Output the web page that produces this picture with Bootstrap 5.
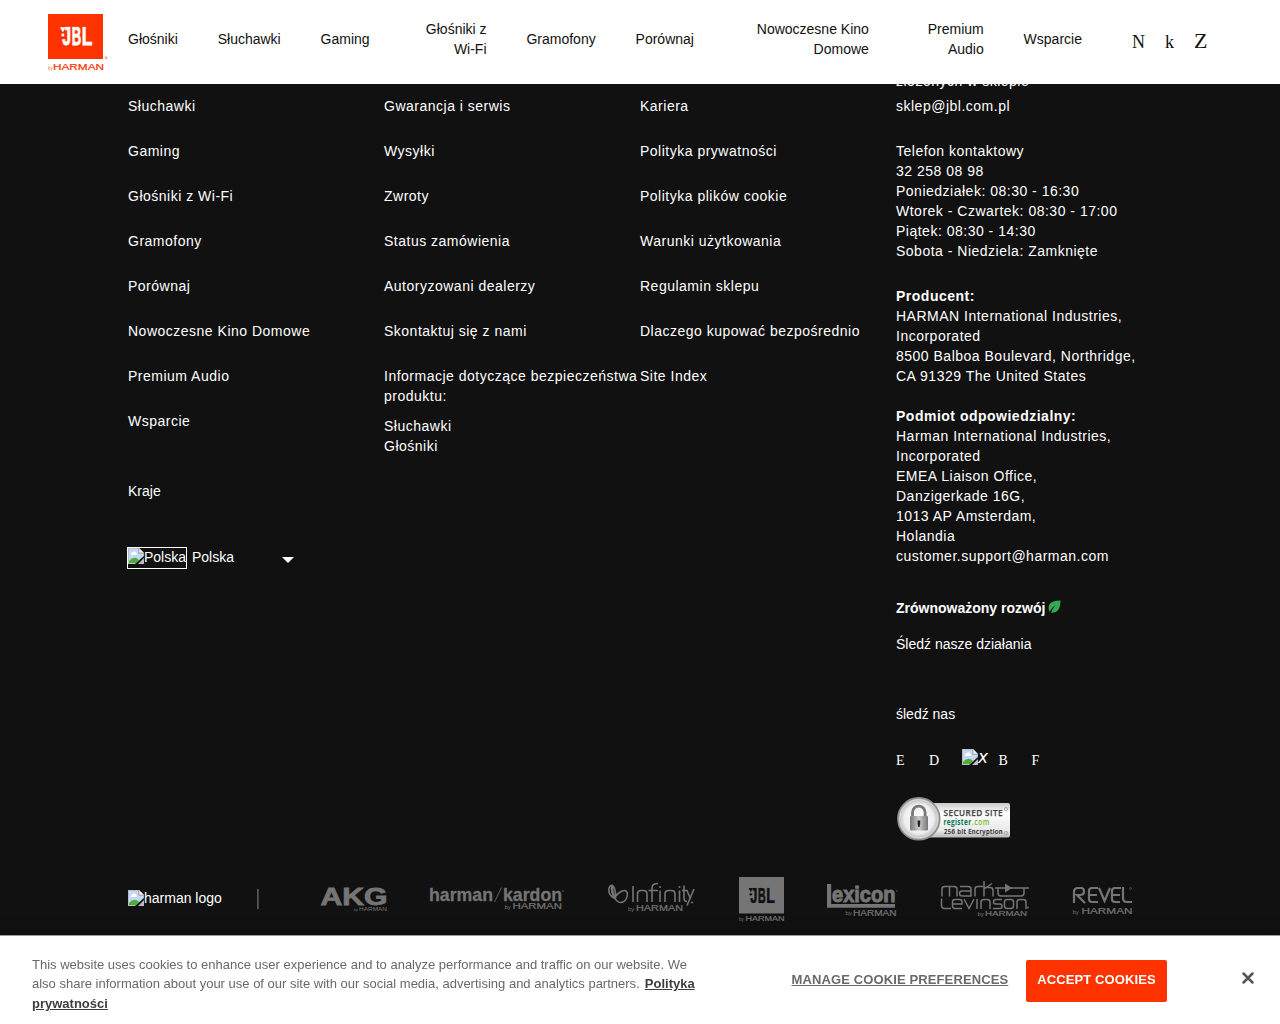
<!DOCTYPE html>
<html lang="pl">
<head>
<meta charset="utf-8">
<meta name="viewport" content="width=device-width, initial-scale=1">
<title>JBL Polska</title>
<link href="https://cdn.jsdelivr.net/npm/bootstrap@5.3.0/dist/css/bootstrap.min.css" rel="stylesheet">
<style>
body{font-family:Helvetica,"Liberation Sans",Arial,sans-serif;font-size:14px;line-height:20px;background:#111;color:#fff;overflow:hidden;height:1024px}
a{color:inherit;text-decoration:none}
svg{overflow:visible}
.site-head{height:84px;background:#fff;color:#111;padding-left:48px}
.site-logo{width:60px;height:58px;margin-top:-1px}
.main-menu{margin-left:20px;gap:39.9px;margin-top:-6px}
.main-menu a{text-align:right}
.w-wifi{width:77px}.w-kino{width:135px}.w-prem{width:75px}
.glyph-icons{font-family:"Liberation Serif",serif;font-size:18px;margin-left:50px;gap:20px;margin-top:-1px}
.glyph-icons .big{font-size:22px}
.foot{width:1024px;margin-left:128px;padding-top:71px}
.foot-cols{height:806px}
.foot-col{width:256px;letter-spacing:.5px;padding-top:25px}
.foot-col.contact{padding-top:0}
.foot-col li{margin-bottom:25px}
.tight{letter-spacing:0}
.lands{padding-top:25px;margin-bottom:46px}
.flag-frame{border:1px solid #fff;height:22px;margin-left:-1px;width:60px;line-height:18px}
.flag-name{margin:-2px 0 0 5px}
.caret{width:0;height:0;border:6px solid transparent;border-top-color:#fff;border-bottom:0;margin:4px 0 0 47.500px}
.social{font-family:"Liberation Serif",serif;height:20px;margin-top:27px;margin-bottom:25px;letter-spacing:0}
.social span{width:33px}
.social i{width:36.500px;height:20px;margin-top:-4px;font-family:"DejaVu Sans",sans-serif;font-size:17px}
.brands{height:45px}
.brands svg{flex:none;height:45px;fill:#757575}
.brands svg.jbl-dark{height:16px;fill:#111}
.cookie{height:89px;background:#fff;color:#696969;box-shadow:0 0 18px rgba(0,0,0,.2);border-top:1px solid #999;font-size:13px;line-height:19.4px}
.cookie-copy{width:680px;margin:19px 0 0 32px}
.cookie-copy a{color:#3d3d3d;font-weight:700;text-decoration:underline;margin-left:1.500px}
.manage{font-weight:700;text-decoration:underline;letter-spacing:.12px;margin:34px 0 0 79.500px;width:217.500px;white-space:nowrap}
.accept{background:#ff3300;color:#fff;font-weight:700;font-size:13px;width:141px;height:42px;margin:24px 0 0 17px;border-radius:2px;padding:0 0 3px;border:0;line-height:36px;letter-spacing:.12px}
.close-x{margin:35.500px 0 0 75px}
</style>
</head>
<body>
<svg width="0" height="0" class="position-absolute"><defs>
<symbol id="broken" viewBox="0 0 16 16"><path d="M0 0H11L16 5V16H0Z" fill="#b9bcc0"/><path d="M1 1H10V6H15V8L8 15H1Z" fill="#c3d8f7"/><path d="M3 6q0-2 2-2q2-2 3 1q2 0 1 2H3Z" fill="#fff"/><path d="M1 15V13Q6 7 11 12L8 15Z" fill="#4fae35"/><path d="M11 0V5H16Z" fill="#f6f6f6" stroke="#999" stroke-width=".7"/><path d="M16 8V10L10 16H7Z" fill="#111"/><path d="M16 11V16H11Z" fill="#b9bcc0"/></symbol>
<symbol id="jbl" viewBox="0 0 35 20"><g font-family="Liberation Sans" font-weight="700" font-size="27" stroke-width=".9"><text transform="translate(2.300 19) scale(.6 1)">J</text><text transform="translate(12 19) scale(.5 1)">B</text><text transform="translate(22.500 19) scale(.66 1)">L</text></g><path d="M0 .5H5.600L2.900 5.500Z"/><circle cx="2.900" cy="8.500" r="1.500"/></symbol>
</defs></svg>

<header class="site-head fixed-top d-flex align-items-center">
  <svg class="site-logo" viewBox="48 13 60 58"><path fill="#f30" d="M48 14h55v45H48z"/><svg x="60" y="26.500" width="34" height="20" fill="#fff" stroke="#fff" stroke-width=".2" viewBox="0 0 35 20"><use href="#jbl" width="35" height="20"/></svg><g fill="#f30" font-family="Liberation Sans"><text x="53" y="69.500" font-size="9" textLength="51" lengthAdjust="spacingAndGlyphs" stroke="#f30" stroke-width=".2">HARMAN</text><text x="48" y="69.500" font-size="4.500" opacity=".7">by</text></g><circle cx="106.200" cy="57.800" r="1" fill="none" stroke="#f30" stroke-width=".5"/></svg>
  <nav class="main-menu d-flex align-items-center">
    <a href="#">Głośniki</a><a href="#">Słuchawki</a><a href="#">Gaming</a><a href="#" class="w-wifi">Głośniki z<br>Wi-Fi</a><a href="#">Gramofony</a><a href="#">Porównaj</a><a href="#" class="w-kino">Nowoczesne Kino<br>Domowe</a><a href="#" class="w-prem">Premium<br>Audio</a><a href="#">Wsparcie</a>
  </nav>
  <div class="glyph-icons d-flex align-items-baseline"><span>N</span><span>k</span><span class="big">Z</span></div>
</header>

<footer class="foot">
  <div class="foot-cols d-flex">
    <div class="foot-col">
      <ul class="list-unstyled mb-0"><li>Słuchawki</li><li>Gaming</li><li>Głośniki z Wi-Fi</li><li>Gramofony</li><li>Porównaj</li><li>Nowoczesne Kino Domowe</li><li>Premium Audio</li><li>Wsparcie</li></ul>
      <div class="tight lands">Kraje</div>
      <div class="tight d-flex align-items-center"><span class="flag-frame d-flex"><svg width="16" height="16" class="flex-shrink-0"><use href="#broken"/></svg>Polska</span><span class="flag-name">Polska</span><span class="caret"></span></div>
    </div>
    <div class="foot-col">
      <ul class="list-unstyled mb-0"><li>Gwarancja i serwis</li><li>Wysyłki</li><li>Zwroty</li><li>Status zamówienia</li><li>Autoryzowani dealerzy</li><li>Skontaktuj się z nami</li><li class="text-nowrap">Informacje dotyczące bezpieczeństwa<br>produktu:<div style="margin-top:10px">Słuchawki<br>Głośniki</div></li></ul>
    </div>
    <div class="foot-col">
      <ul class="list-unstyled mb-0"><li>Kariera</li><li>Polityka prywatności</li><li>Polityka plików cookie</li><li>Warunki użytkowania</li><li>Regulamin sklepu</li><li>Dlaczego kupować bezpośrednio</li><li>Site Index</li></ul>
    </div>
    <div class="foot-col contact text-nowrap">
      <div style="margin-bottom:5px">złożonych w sklepie</div>
      <div style="margin-bottom:25px">sklep@jbl.com.pl</div>
      <div style="margin-bottom:25px">Telefon kontaktowy<br>32 258 08 98<br>Poniedziałek: 08:30 - 16:30<br>Wtorek - Czwartek: 08:30 - 17:00<br>Piątek: 08:30 - 14:30<br>Sobota - Niedziela: Zamknięte</div>
      <div style="margin-bottom:20px"><b>Producent:</b><br>HARMAN International Industries,<br>Incorporated<br>8500 Balboa Boulevard, Northridge,<br>CA 91329 The United States</div>
      <div style="margin-bottom:32px"><b>Podmiot odpowiedzialny:</b><br>Harman International Industries,<br>Incorporated<br>EMEA Liaison Office,<br>Danzigerkade 16G,<br>1013 AP Amsterdam,<br>Holandia<br>customer.support@harman.com</div>
      <div class="tight d-flex mb-3"><b>Zrównoważony rozwój</b><svg width="14" height="14" viewBox="0 0 14 14" style="margin:2px 0 0 3px"><path d="M12.500 .5Q4 .8 1.800 4Q-.5 7.500 1.600 11.800Q3 8 7.500 5.200Q4 9 3 12.700Q8 13 10.500 9.500Q12.300 7 12.500 .5Z" fill="#34a853"/></svg></div>
      <div class="tight" style="margin-bottom:50px">Śledź nasze działania</div>
      <div class="tight">śledź nas</div>
      <div class="social d-flex align-items-start"><span>E</span><span>D</span><i class="d-flex"><svg width="16" height="16" style="margin-top:2px" class="flex-shrink-0"><use href="#broken"/></svg>x</i><span>B</span><span>F</span></div>
      <svg class="d-block" width="115" height="45" viewBox="896 796 115 45">
        <defs><linearGradient id="sg" x2="0" y2="1"><stop stop-color="#c9c9c9"/><stop offset=".3" stop-color="#fff"/><stop offset=".8" stop-color="#e8e8e8"/><stop offset="1" stop-color="#b8b8b8"/></linearGradient><linearGradient id="lk" x2="1"><stop stop-color="#777"/><stop offset=".5" stop-color="#ccc"/><stop offset="1" stop-color="#777"/></linearGradient><radialGradient id="rg"><stop stop-color="#fff"/><stop offset=".7" stop-color="#eee"/><stop offset="1" stop-color="#aaa"/></radialGradient></defs>
        <rect x="918" y="803" width="92" height="34.500" rx="2" fill="url(#sg)"/><circle cx="918.800" cy="818.800" r="21" fill="url(#rg)" stroke="#8b8b8b" stroke-width="1.400"/><circle cx="918.800" cy="818.800" r="19" fill="none" stroke="#ddd"/>
        <path d="M912.500 817V812.500a6.300 6.300 0 0 1 12.600 0V817" fill="none" stroke="#777" stroke-width="2.800"/><rect x="910" y="816" width="18" height="14.500" rx="1" fill="url(#lk)"/><path d="M917.600 820.500h2.600v3l-.6 3.500h-1.400l-.6-3.500z" fill="#222"/>
        <g font-family="Open Sans" font-weight="600"><text x="943.500" y="816" font-size="9.500" fill="#444" stroke="#444" stroke-width=".25" textLength="59.500" lengthAdjust="spacingAndGlyphs">SECURED SITE</text><text x="943.500" y="825.400" font-weight="700" fill="#00764b" font-size="8.300" textLength="28" lengthAdjust="spacingAndGlyphs">register</text><text x="971.800" y="825.400" fill="#74b82a" font-size="8.300" textLength="18" lengthAdjust="spacingAndGlyphs">.com</text><text x="944" y="833.600" fill="#333" stroke="#333" stroke-width=".2" font-size="7.500" textLength="59" lengthAdjust="spacingAndGlyphs">256 bit Encryption</text></g><g fill="none" stroke="#888" stroke-width=".6"><circle cx="1006" cy="809" r="1.600"/><circle cx="1006" cy="833" r="1.600"/></g>
      </svg>
    </div>
  </div>
  <div class="brands d-flex">
    <div class="d-flex" style="width:129px;padding-top:11px"><svg width="16" height="16" style="height:16px;margin-top:2px"><use href="#broken"/></svg><span>harman logo</span></div>
    <svg width="2" viewBox="257 877 2 45"><path d="M257 889h1.800v20H257z" fill="#555"/></svg>
    <svg style="margin-left:61px" width="68" viewBox="320 877 68 45" font-family="Liberation Sans"><text x="320.500" y="905.200" font-size="24" font-weight="700" textLength="67" lengthAdjust="spacingAndGlyphs" stroke="#757575" stroke-width=".8">AKG</text><text x="354" y="911" font-size="3.500">by</text><text x="359" y="911" font-size="4.500" textLength="28" lengthAdjust="spacingAndGlyphs">HARMAN</text></svg>
    <svg style="margin-left:41px" width="136" viewBox="429 877 136 45" font-family="Liberation Sans"><text x="429" y="901" font-size="18.500" font-weight="700" textLength="64" lengthAdjust="spacingAndGlyphs" stroke="#757575" stroke-width=".3">harman</text><path d="M494.500 902L501.500 887.500" stroke="#757575" stroke-width=".8"/><text x="503" y="901" font-size="18.500" font-weight="700" textLength="59" lengthAdjust="spacingAndGlyphs" stroke="#757575" stroke-width=".3">kardon</text><text x="504.500" y="908.500" font-size="6">by</text><text x="512.500" y="909" font-size="9" textLength="49.500" lengthAdjust="spacingAndGlyphs" stroke="#757575" stroke-width=".2">HARMAN</text><circle cx="563" cy="891" r=".7"/></svg>
    <svg style="margin-left:42px" width="89" viewBox="607 877 89 45" font-family="Liberation Sans"><g fill="none" stroke="#757575" stroke-width="1.600"><path d="M613 885.500C607.500 884 607 895 614 898C618 899 614 885 612.500 885.500C609.500 889 615 903 621 902.500C627 902 629.500 892 625 890.500C621 890 618 893.500 614 898"/><path d="M612.500 885.500C611 889 613 895 615.500 898.500" stroke-width="2.500"/><path d="M633 886V902M637.500 902V894Q637.500 890.500 641 890.500H643.500Q647 890.500 647 894V902M652 902V888Q652 883.500 658 883.500M648.500 890.500H658M660 890.500V902M665 902V894Q665 890.500 668.500 890.500H671.500Q675 890.500 675 894V902M679.500 890.500V902M684 885.500V898Q684 901.500 687 901.500M682 890.500H687L690.500 899M694 889L687 905.500"/></g><circle cx="660" cy="887" r="1"/><circle cx="679.500" cy="887" r="1"/><circle cx="692" cy="902.500" r="1"/><text x="628" y="910.500" font-size="6">by</text><text x="636" y="911" font-size="8.500" textLength="47" lengthAdjust="spacingAndGlyphs" stroke="#757575" stroke-width=".2">HARMAN</text></svg>
    <svg style="margin-left:43px" width="46" viewBox="739 877 46 45" font-family="Liberation Sans"><path d="M739 877h45v36.500h-45z"/><svg class="jbl-dark" x="748.500" y="887.500" width="27.500" height="16" stroke="#111" stroke-width=".2" viewBox="0 0 35 20"><use href="#jbl" width="35" height="20"/></svg><text x="739" y="920.700" font-size="4.500">by</text><text x="745.500" y="921.300" font-size="7.500" textLength="39" lengthAdjust="spacingAndGlyphs" stroke="#757575" stroke-width=".2">HARMAN</text></svg>
    <svg style="margin-left:41px" width="73" viewBox="826 877 73 45" font-family="Liberation Sans"><path d="M827 884h4.200v20H895v3.800H827z"/><text x="832" y="902" font-size="22" font-weight="700" textLength="63.500" lengthAdjust="spacingAndGlyphs" stroke="#757575" stroke-width="1">exicon</text><text x="845.500" y="915" font-size="6">by</text><text x="853" y="915.500" font-size="8.500" textLength="43.500" lengthAdjust="spacingAndGlyphs" stroke="#757575" stroke-width=".2">HARMAN</text><circle cx="897" cy="891" r=".7"/></svg>
    <svg style="margin-left:41px" width="90" viewBox="940 877 90 45" font-family="Liberation Sans"><g fill="none" stroke="#757575" stroke-width="1.500"><path d="M942 896.500V889Q942 886.500 945 886.500H954Q957 886.500 957 889V896.500M949.500 886.500V896.500M960 886.500H968Q971 886.500 971 889V896H962Q959.500 896 959.500 893.500Q959.500 891 962 891H971M975 896.500V889Q975 886.500 978 886.500H983M984 881V896.500M984 889L992 883.500M984 887.500H990Q993 887.500 993 890V896.500M995 888H1029M998 888V893Q998 896 1001 896H1021Q1024 896 1024 893V888M941.500 898.500V905.500Q941.500 908.500 944.500 908.500H951M962 908.500H955Q952.500 908.500 952.500 905.500V902Q952.500 899.500 955 899.500H960Q962 899.500 962 902V904H953M964 899L969 908.500L974 899M977 899V909M981 909V902Q981 899.500 984 899.500H987Q990 899.500 990 902V909M1002 899.500H996Q993.500 899.500 993.500 902Q993.500 904 996 904H1000Q1002 904 1002 906.500Q1002 908.500 1000 908.500H993M1007 899.500H1011Q1013.500 899.500 1013.500 902V906Q1013.500 908.500 1011 908.500H1007Q1004.500 908.500 1004.500 906V902Q1004.500 899.500 1007 899.500ZM1017 909V902Q1017 899.500 1020 899.500H1023Q1026 899.500 1026 902V909"/></g><path d="M1005 883.500L1012 888L1005 892.500Z"/><circle cx="1028" cy="907.500" r=".9"/><text x="977.500" y="915.500" font-size="6">by</text><text x="985" y="916" font-size="8" textLength="42" lengthAdjust="spacingAndGlyphs" stroke="#757575" stroke-width=".2">HARMAN</text></svg>
    <svg style="margin-left:42px" width="62" viewBox="1072 877 62 45" font-family="Liberation Sans"><g fill="none" stroke="#757575" stroke-width="2.200"><path d="M1074 903V892Q1074 888 1078 888H1081Q1084 888 1084 891.500Q1084 895 1080 895H1077L1085 903M1098 888H1092Q1089 888 1089 891V899Q1089 902 1092 902H1098M1089 895H1097M1099 888L1104.500 901L1110 888M1121 888H1115Q1112 888 1112 891V899Q1112 902 1115 902H1120M1112 895H1120M1123 887V898Q1123 902 1127 902H1132"/></g><circle cx="1130.500" cy="888.500" r="1" fill="none" stroke="#757575" stroke-width=".5"/><text x="1072.500" y="913.500" font-size="6">by</text><text x="1081.500" y="914" font-size="9" textLength="51" lengthAdjust="spacingAndGlyphs" stroke="#757575" stroke-width=".2">HARMAN</text></svg>
  </div>
</footer>

<section class="cookie fixed-bottom d-flex align-items-start">
  <div class="cookie-copy">This website uses cookies to enhance user experience and to analyze performance and traffic on our website. We<br>also share information about your use of our site with our social media, advertising and analytics partners. <a href="#">Polityka<br>prywatności</a></div>
  <a href="#" class="manage">MANAGE COOKIE PREFERENCES</a>
  <button class="accept">ACCEPT COOKIES</button>
  <svg class="close-x" width="12" height="12" viewBox="0 0 12 12"><path d="M1.500 1.500L10.500 10.500M10.500 1.500L1.500 10.500" stroke="#565656" stroke-width="2.500" stroke-linecap="round"/></svg>
</section>
<script src="https://cdn.jsdelivr.net/npm/bootstrap@5.3.0/dist/js/bootstrap.bundle.min.js"></script>
</body>
</html>
